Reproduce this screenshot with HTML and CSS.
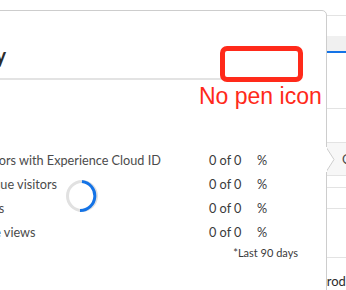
FILE: index.html
```html
<!DOCTYPE html>
<html lang="en">
<head>
  <meta charset="UTF-8" />
  <meta name="viewport" content="width=device-width, initial-scale=1.0"/>
  <title>Data summary</title>
  <link rel="stylesheet" href="styles.css">
</head>
<body>
  <div class="page">
    <div class="bar bar-top"></div>
    <div class="bar bar-gap"></div>
    <div class="bar bar-tabs"></div>
    <div class="bar bar-tall"></div>
    <div class="bar bar-mid"></div>
    <div class="bar bar-shaded"><span class="cell">C</span></div>
    <div class="bar bar-thin"></div>
    <div class="bar bar-row"></div>
    <div class="bar bar-big"></div>
    <div class="bar bar-text"><span class="cell-prod">Products</span></div>

    <div class="popover">
      <div class="popover-header">
        <h1 class="title">Data summary</h1>
      </div>

      <div class="popover-body">
        <div class="stats">
          <span class="label">Visitors with Experience Cloud ID</span>
          <span class="value">0 of 0</span>
          <span class="pct">%</span>

          <span class="label">Unique visitors</span>
          <span class="value">0 of 0</span>
          <span class="pct">%</span>

          <span class="label">Visits</span>
          <span class="value">0 of 0</span>
          <span class="pct">%</span>

          <span class="label">Page views</span>
          <span class="value">0 of 0</span>
          <span class="pct">%</span>
        </div>
        <p class="note">*Last 90 days</p>
      </div>

      <svg class="spinner" width="32" height="32" viewBox="0 0 32 32">
        <circle cx="16" cy="16" r="14.5" fill="none" stroke="#e1e1e1" stroke-width="3"/>
        <path d="M16 1.5 A14.5 14.5 0 0 1 14 30.4" fill="none" stroke="#1473e6" stroke-width="3"/>
      </svg>

      <svg class="tip" width="9" height="25" viewBox="0 0 9 25">
        <polygon points="0,0 8,12.5 0,25" fill="#fff" stroke="#cdcdcd" stroke-width="1"/>
        <rect x="0" y="0" width="1" height="25" fill="#fff"/>
      </svg>
    </div>

    <div class="mark-box"></div>
    <div class="mark-text">No pen icon</div>
  </div>
</body>
</html>
```

FILE: styles.css
```css
* {
  box-sizing: border-box;
}

body {
  margin: 0;
  padding: 0;
  background-color: #fff;
  font-family: Lato, "Open Sans", sans-serif;
  color: #4b4b4b;
  overflow: hidden;
}

.page {
  position: relative;
  width: 346px;
  height: 290px;
  overflow: hidden;
}

/* page behind the popover */
.bar {
  border-bottom: 1px solid #e3e3e3;
}

.bar-top {
  height: 16px;
}

.bar-gap {
  height: 20px;
  border-bottom: none;
}

.bar-tabs {
  height: 17px;
  background-color: #f0f0f0;
  border-bottom: 2px solid #1473e6;
}

.bar-tall {
  height: 56px;
}

.bar-mid {
  height: 34px;
}

.bar-shaded {
  height: 33px;
  background-color: #f7f7f7;
  display: flex;
  align-items: center;
}

.cell {
  margin-left: 342px;
  font-size: 13px;
  color: #4b4b4b;
}

.bar-thin {
  height: 12px;
}

.bar-row {
  height: 21px;
}

.bar-big {
  height: 49px;
}

.bar-text {
  border-bottom: none;
  padding: 15px 0 0 319px;
  font-size: 13px;
  color: #2c2c2c;
}

/* popover */
.popover {
  position: absolute;
  top: 10px;
  left: -64px;
  width: 391px;
  height: 300px;
  padding: 0 28px 0 37px;
  background-color: #fff;
  border: 1px solid #cdcdcd;
  border-radius: 0 5px 0 0;
}

.popover-header {
  padding: 32px 0 11px;
  border-bottom: 2px solid #e3e3e3;
}

.title {
  margin: 0 0 0 -97px;
  font-size: 20px;
  line-height: 24px;
  font-weight: 700;
  color: #2c2c2c;
  white-space: nowrap;
}

.popover-body {
  padding-top: 68px;
}

.stats {
  display: grid;
  grid-template-columns: 235px 48px auto;
  font-size: 12.7px;
  line-height: 24px;
}

.label {
  white-space: nowrap;
}

.value,
.pct {
  color: #3a3a3a;
}

.note {
  margin: 1px 0 0;
  font-size: 11px;
  line-height: 16px;
  text-align: right;
  color: #3a3a3a;
}

.spinner {
  position: absolute;
  left: 129px;
  top: 169px;
}

.tip {
  position: absolute;
  top: 136px;
  right: -9px;
}

/* annotation */
.mark-box {
  position: absolute;
  left: 220px;
  top: 46px;
  width: 83px;
  height: 36px;
  border: 5px solid #ff2a1a;
  border-radius: 7px;
}

.mark-text {
  position: absolute;
  left: 199px;
  top: 83px;
  font-family: "Liberation Sans", Arial, sans-serif;
  font-size: 23px;
  line-height: 26px;
  color: #ff2a1a;
}
```
